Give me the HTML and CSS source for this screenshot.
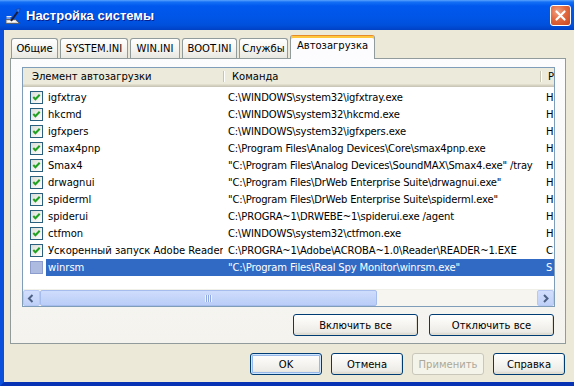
FILE: index.html
```html
<!DOCTYPE html>
<html lang="ru">
<head>
<meta charset="utf-8">
<title>Настройка системы</title>
<link rel="stylesheet" href="styles.css">
</head>
<body>
<div class="window">
  <div class="titlebar">
    <svg class="app-icon" width="16" height="16" viewBox="0 0 16 16">
      <path d="M1 11.5 L10.5 11.5 L14.5 15.5 L1 15.5 Z" fill="#d9d9d9" stroke="#555" stroke-width="0.8"/>
      <path d="M2.5 13.5 h8" stroke="#fff" stroke-width="1"/>
      <path d="M1.5 8.5 h5 M1.5 10 h4" stroke="#e8e8e8" stroke-width="1"/>
      <path d="M6 13 L12.5 4" stroke="#1b1b3a" stroke-width="2"/>
      <path d="M11 1.5 L15 0.5 L14 5 Z" fill="#3f7fe6" stroke="#1a3a90" stroke-width="0.6"/>
    </svg>
    <span class="title">Настройка системы</span>
    <div class="close">
      <svg width="13" height="13" viewBox="0 0 13 13"><path d="M2.5 2.5 L10.5 10.5 M10.5 2.5 L2.5 10.5" stroke="#fff" stroke-width="2.2" stroke-linecap="round"/></svg>
    </div>
  </div>
  <div class="client">
    <div class="tabs">
      <div class="tab t1">Общие</div>
      <div class="tab t2">SYSTEM.INI</div>
      <div class="tab t3">WIN.INI</div>
      <div class="tab t4">BOOT.INI</div>
      <div class="tab t5">Службы</div>
      <div class="tab active">Автозагрузка</div>
    </div>
    <div class="panel">
      <div class="list">
        <div class="lhead">
          <div class="hcell w1">Элемент автозагрузки</div>
          <div class="hcell w2">Команда</div>
          <div class="hcell w3">Р</div>
        </div>
        <div class="rows">
          <div class="row"><div class="chk-cell"><span class="chk"><svg viewBox="0 0 11 11"><polyline points="2.3,5 4.4,7.2 8.7,2.7"/></svg></span></div><div class="cell name">igfxtray</div><div class="cell cmd">C:\WINDOWS\system32\igfxtray.exe</div><div class="cell loc">H</div></div>
          <div class="row"><div class="chk-cell"><span class="chk"><svg viewBox="0 0 11 11"><polyline points="2.3,5 4.4,7.2 8.7,2.7"/></svg></span></div><div class="cell name">hkcmd</div><div class="cell cmd">C:\WINDOWS\system32\hkcmd.exe</div><div class="cell loc">H</div></div>
          <div class="row"><div class="chk-cell"><span class="chk"><svg viewBox="0 0 11 11"><polyline points="2.3,5 4.4,7.2 8.7,2.7"/></svg></span></div><div class="cell name">igfxpers</div><div class="cell cmd">C:\WINDOWS\system32\igfxpers.exe</div><div class="cell loc">H</div></div>
          <div class="row"><div class="chk-cell"><span class="chk"><svg viewBox="0 0 11 11"><polyline points="2.3,5 4.4,7.2 8.7,2.7"/></svg></span></div><div class="cell name">smax4pnp</div><div class="cell cmd">C:\Program Files\Analog Devices\Core\smax4pnp.exe</div><div class="cell loc">H</div></div>
          <div class="row"><div class="chk-cell"><span class="chk"><svg viewBox="0 0 11 11"><polyline points="2.3,5 4.4,7.2 8.7,2.7"/></svg></span></div><div class="cell name">Smax4</div><div class="cell cmd">"C:\Program Files\Analog Devices\SoundMAX\Smax4.exe" /tray</div><div class="cell loc">H</div></div>
          <div class="row"><div class="chk-cell"><span class="chk"><svg viewBox="0 0 11 11"><polyline points="2.3,5 4.4,7.2 8.7,2.7"/></svg></span></div><div class="cell name">drwagnui</div><div class="cell cmd">"C:\Program Files\DrWeb Enterprise Suite\drwagnui.exe"</div><div class="cell loc">H</div></div>
          <div class="row"><div class="chk-cell"><span class="chk"><svg viewBox="0 0 11 11"><polyline points="2.3,5 4.4,7.2 8.7,2.7"/></svg></span></div><div class="cell name">spiderml</div><div class="cell cmd">"C:\Program Files\DrWeb Enterprise Suite\spiderml.exe"</div><div class="cell loc">H</div></div>
          <div class="row"><div class="chk-cell"><span class="chk"><svg viewBox="0 0 11 11"><polyline points="2.3,5 4.4,7.2 8.7,2.7"/></svg></span></div><div class="cell name">spiderui</div><div class="cell cmd">C:\PROGRA~1\DRWEBE~1\spiderui.exe /agent</div><div class="cell loc">H</div></div>
          <div class="row"><div class="chk-cell"><span class="chk"><svg viewBox="0 0 11 11"><polyline points="2.3,5 4.4,7.2 8.7,2.7"/></svg></span></div><div class="cell name">ctfmon</div><div class="cell cmd">C:\WINDOWS\system32\ctfmon.exe</div><div class="cell loc">H</div></div>
          <div class="row"><div class="chk-cell"><span class="chk"><svg viewBox="0 0 11 11"><polyline points="2.3,5 4.4,7.2 8.7,2.7"/></svg></span></div><div class="cell name">Ускоренный запуск Adobe Reader</div><div class="cell cmd">C:\PROGRA~1\Adobe\ACROBA~1.0\Reader\READER~1.EXE</div><div class="cell loc">C</div></div>
          <div class="row sel"><div class="chk-cell"><span class="chk off"></span></div><div class="cell name">winrsm</div><div class="cell cmd">"C:\Program Files\Real Spy Monitor\winrsm.exe"</div><div class="cell loc">S</div></div>
        </div>
        <div class="hscroll">
          <div class="sbtn"><svg width="15" height="15" viewBox="0 0 15 15"><polyline points="8.5,4 5,7.5 8.5,11" fill="none" stroke="#4D6185" stroke-width="2"/></svg></div>
          <div class="track">
            <div class="thumb"><span class="grip"></span></div>
          </div>
          <div class="sbtn"><svg width="15" height="15" viewBox="0 0 15 15"><polyline points="6,4 9.5,7.5 6,11" fill="none" stroke="#4D6185" stroke-width="2"/></svg></div>
        </div>
      </div>
      <div class="panel-buttons">
        <button class="btn wide">Включить все</button>
        <button class="btn wide">Отключить все</button>
      </div>
    </div>
    <div class="dialog-buttons">
      <button class="btn std default">OK</button>
      <button class="btn std">Отмена</button>
      <button class="btn std disabled">Применить</button>
      <button class="btn std">Справка</button>
    </div>
  </div>
</div>
</body>
</html>
```
FILE: styles.css
```css
* { box-sizing: border-box; }
html, body { margin: 0; padding: 0; }
body {
  width: 574px;
  height: 386px;
  overflow: hidden;
  background: #ECE9D8;
  font-family: "DejaVu Sans", Tahoma, sans-serif;
  font-size: 10px;
  color: #000;
}
.window {
  width: 574px;
  height: 386px;
  display: flex;
  flex-direction: column;
}
.titlebar {
  flex: none;
  height: 30px;
  display: flex;
  align-items: center;
  padding: 0 3px 0 5px;
  background: linear-gradient(to bottom, #5AA2FF 0px, #1470F4 2px, #0058EE 6px, #0055E6 18px, #0050DC 25px, #0041C4 30px);
}
.app-icon { flex: none; margin-right: 5px; margin-top: 1px; }
.title {
  flex: 1;
  font-family: "Liberation Sans", Arial, sans-serif;
  font-weight: bold;
  font-size: 13px;
  color: #fff;
  text-shadow: 1px 1px 0 #0A1E8A;
  margin-top: 1px;
}
.close {
  flex: none;
  width: 21px;
  height: 21px;
  border: 1px solid #fff;
  border-radius: 3px;
  background: radial-gradient(circle at 35% 30%, #F2A182 0%, #E2693F 45%, #C8461F 100%);
  display: flex;
  align-items: center;
  justify-content: center;
}
.client {
  flex: 1;
  display: flex;
  flex-direction: column;
  border-left: 4px solid #0B50DD;
  border-bottom: 4px solid #0832B4;
  padding: 5px 8px 0 6px;
}
.tabs {
  flex: none;
  height: 23px;
  display: flex;
  align-items: flex-end;
  padding-left: 1px;
  position: relative;
  z-index: 2;
}
.tab {
  height: 20px;
  margin-right: 2px;
  border: 1px solid #919B9C;
  border-bottom: none;
  border-radius: 3px 3px 0 0;
  background: linear-gradient(#FFFFFF, #F4F3EF 60%, #E8E7E0);
  display: flex;
  align-items: center;
  justify-content: center;
  padding-bottom: 1px;
  white-space: nowrap;
}
.t1 { width: 47px; }
.t2 { width: 68px; }
.t3 { width: 50px; }
.t4 { width: 55px; }
.t5 { width: 49px; }
.tab.active {
  width: 85px;
  height: 24px;
  margin-bottom: -1px;
  border-top-color: #E68B2C;
  box-shadow: inset 0 2px 0 #FFC83C;
  background: #FCFCFE;
  padding-bottom: 4px;
}
.panel {
  flex: none;
  height: 286px;
  border: 1px solid #919B9C;
  background: linear-gradient(#FCFCFE, #F4F3EE);
  padding: 8px 10px 0 11px;
  display: flex;
  flex-direction: column;
  position: relative;
  z-index: 1;
}
.list {
  flex: none;
  height: 240px;
  border: 1px solid #7F9DB9;
  background: #fff;
  display: flex;
  flex-direction: column;
  overflow: hidden;
}
.lhead {
  flex: none;
  height: 19px;
  display: flex;
  background: #EBEADB;
  box-shadow: inset 0 -1px 0 #CBC7B8, inset 0 -2px 0 #D6D2C2, inset 0 -3px 0 #E2DECD;
}
.hcell {
  position: relative;
  display: flex;
  align-items: center;
  padding-left: 9px;
  padding-bottom: 2px;
  white-space: nowrap;
  overflow: hidden;
}
.hcell + .hcell::before {
  content: "";
  position: absolute;
  left: 0;
  top: 3px;
  bottom: 5px;
  width: 1px;
  background: #C7C5B2;
  box-shadow: 1px 0 0 #fff;
}
.w1 { width: 200px; flex: none; }
.w2 { width: 317px; flex: none; }
.w3 { flex: 1; padding-left: 8px; }
.rows {
  flex: 1;
  padding-top: 2px;
}
.row {
  height: 17px;
  display: flex;
  align-items: center;
  white-space: nowrap;
}
.chk-cell {
  flex: none;
  width: 23px;
  padding-left: 7px;
  display: flex;
  align-items: center;
}
.chk {
  display: block;
  width: 13px;
  height: 13px;
  border: 1px solid #2B5F7E;
  background: linear-gradient(135deg, #DCDCD7, #FFFFFF);
}
.chk svg { display: block; width: 11px; height: 11px; }
.chk polyline { fill: none; stroke: #21A121; stroke-width: 2; }
.chk.off {
  background: #AEBBE1;
  border-color: #8B9CCD;
}
.cell {
  height: 17px;
  line-height: 17px;
  overflow: hidden;
}
.name { flex: none; width: 177px; padding-left: 2px; }
.cmd { flex: none; width: 317px; padding-left: 5px; letter-spacing: -0.15px; }
.loc { flex: 1; padding-left: 6px; }
.row.sel .cell { background: #316AC5; color: #fff; }
.hscroll {
  flex: none;
  height: 17px;
  display: flex;
  background: #F6F5F0;
  border-top: 1px solid #F0EFE8;
}
.sbtn {
  flex: none;
  width: 17px;
  height: 16px;
  border: 1px solid #B7C8F2;
  border-radius: 2px;
  background: linear-gradient(#D2DEFC, #BFD0F8);
  display: flex;
  align-items: center;
  justify-content: center;
}
.track { flex: 1; display: flex; }
.thumb {
  width: 337px;
  height: 16px;
  border: 1px solid #A6BCEC;
  border-radius: 2px;
  background: linear-gradient(#CFDCFC, #BACDF7);
  display: flex;
  align-items: center;
  justify-content: center;
}
.grip {
  width: 7px;
  height: 7px;
  background: repeating-linear-gradient(to right, #EEF3FE 0 1px, #8FA8E3 1px 2px);
}
.panel-buttons {
  display: flex;
  justify-content: flex-end;
  gap: 11px;
  margin-top: 7px;
  padding-right: 1px;
}
.btn {
  font: inherit;
  color: #000;
  padding: 0;
  height: 22px;
  border: 1px solid #003C74;
  border-radius: 3px;
  background: linear-gradient(#FFFFFF, #F6F5F1 45%, #ECEBE6 85%, #D6D0C5);
  box-shadow: inset -1px -1px 0 #E0DDD2;
}
.btn.wide { width: 125px; }
.btn.std { width: 72px; }
.btn.default {
  box-shadow: inset 0 0 0 1px #CEE7FF, inset 0 0 0 2px #98B8EA;
}
.btn.disabled {
  border-color: #C9C7BA;
  color: #ACA899;
  background: #F5F4EA;
  box-shadow: none;
}
.dialog-buttons {
  display: flex;
  justify-content: flex-end;
  gap: 9px;
  margin-top: 9px;
  padding-right: 1px;
}
```
